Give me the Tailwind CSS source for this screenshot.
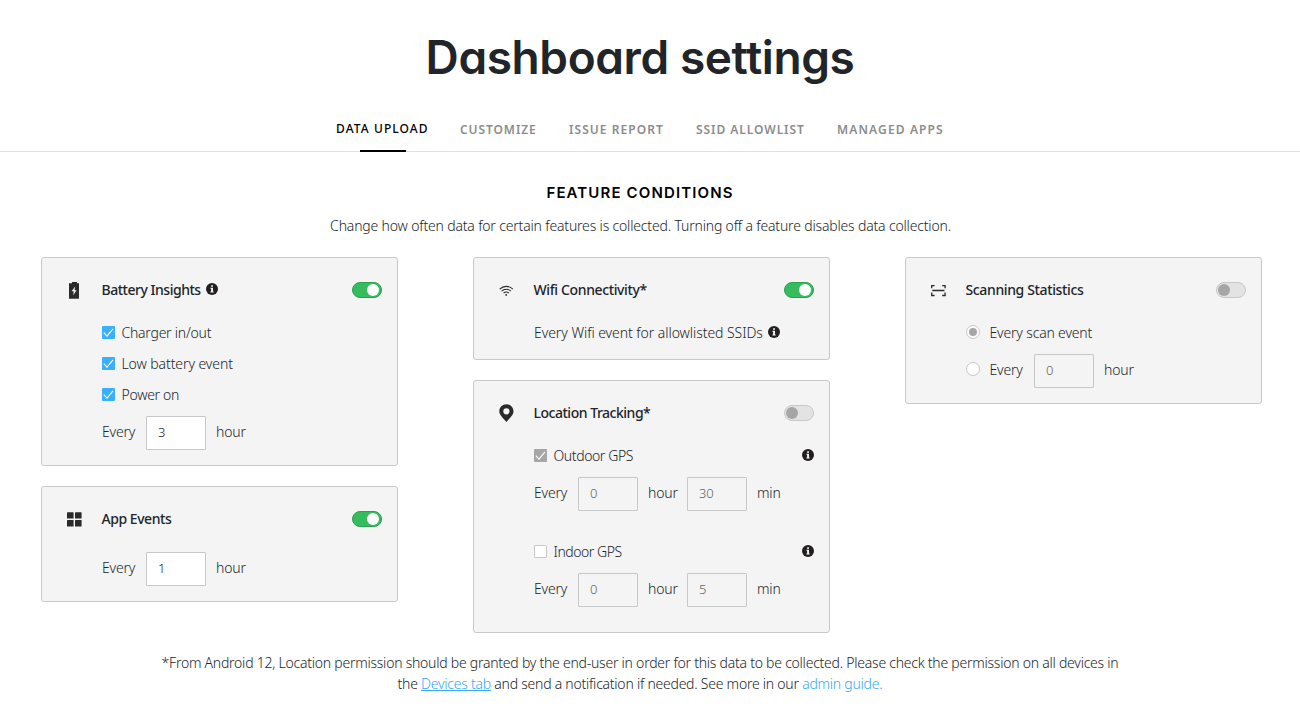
<!DOCTYPE html>
<html lang="en">
<head>
<meta charset="utf-8">
<title>Dashboard settings</title>
<script src="https://cdn.jsdelivr.net/npm/@tailwindcss/browser@4"></script>
</head>
<body class="h-[706px] overflow-hidden bg-white font-['Noto_Sans','Open_Sans',sans-serif] text-sm font-light tracking-[-0.17px] text-[#212529]">
<svg class="hidden">
  <symbol id="info" viewBox="0 0 12 12"><circle cx="6" cy="6" r="6" fill="#231f20"/><path fill="#f4f4f4" d="M5.1 2.2h1.900v1.500H5.100zM4.400 4.800H7v3.600h.7v1H4.400v-1h.7V5.800h-.7z"/></symbol>
  <symbol id="check" viewBox="0 0 13 13"><path d="M1.8 6.600l3.200 3.500 6-7.200" fill="none" stroke="#fff" stroke-width="1.1"/></symbol>
</svg>

<header class="border-b border-[#dfdfdf]">
  <h1 class="flex h-[106px] w-[1280px] items-center justify-center pt-[9px] font-['Inter',sans-serif] text-[46px] font-semibold tracking-[-0.4px] [font-feature-settings:'cv11']">Dashboard settings</h1>
  <nav class="flex h-[45px] pl-[336px] text-xs font-semibold text-[#8c8c8c] whitespace-nowrap">
    <a class="-mb-px flex w-[93px] flex-col items-center justify-between pt-[14px] font-medium text-black"><span class="w-full leading-[18px] tracking-[1.1px]">DATA UPLOAD</span><span class="h-0.5 w-[46px] bg-black"></span></a>
    <a class="ml-[31px] w-[77px] pt-[15px] leading-[18px] tracking-[0.92px]">CUSTOMIZE</a>
    <a class="ml-8 w-[95px] pt-[15px] leading-[18px] tracking-[1.05px]">ISSUE REPORT</a>
    <a class="ml-8 w-[110px] pt-[15px] leading-[18px] tracking-[0.94px]">SSID ALLOWLIST</a>
    <a class="ml-[31px] w-[107px] pt-[15px] leading-[18px] tracking-[1.13px]">MANAGED APPS</a>
  </nav>
</header>

<main>
  <section class="w-[1280px] pt-[29px] text-center">
    <h2 class="font-['Inter',sans-serif] text-[15px] leading-6 font-semibold tracking-[1.13px] text-black">FEATURE CONDITIONS</h2>
    <p class="mt-2.5 pl-px leading-[21px]">Change how often data for certain features is collected. Turning off a feature disables data collection.</p>
  </section>

  <div class="mt-[21px] flex h-[376px] items-start gap-[75px] pl-[41px]">
    <div class="flex w-[357px] flex-col gap-5">
      <section class="rounded-[3px] border border-[#c8c8c8] bg-[#f4f4f4] pb-[15px]">
        <div class="flex h-[59px] items-center pt-[5px] pr-[15px] pl-[22px]">
          <svg class="mr-[17.500px] size-5" viewBox="0 0 20 20"><path d="M8 2h5v1.200h2v15.600H5V3.200h3z" fill="#2a2a2a"/><path d="M11.200 6.500l-3.600 4.700h2.200l-.7 4 3.500-4.900h-2.100z" fill="#f4f4f4"/></svg>
          <h3 class="font-medium tracking-[-0.48px]">Battery Insights</h3>
          <svg class="mb-0.5 ml-[5px] size-3"><use href="#info"/></svg>
          <span class="ml-auto flex h-4 w-[30px] justify-end rounded-full border border-[#2ba04f] bg-[#34bc5e] p-px pr-0.5"><i class="size-3 rounded-full bg-white"></i></span>
        </div>
        <div class="pl-[60px]">
          <div class="flex h-[31px] items-center gap-[6.500px] tracking-[-0.24px]"><span class="size-[13px] rounded-[1px] bg-[#38b0ff]"><svg class="size-[13px]"><use href="#check"/></svg></span>Charger in/out</div>
          <div class="flex h-[31px] items-center gap-[6.500px] tracking-[-0.09px]"><span class="size-[13px] rounded-[1px] bg-[#38b0ff]"><svg class="size-[13px]"><use href="#check"/></svg></span>Low battery event</div>
          <div class="flex h-[31px] items-center gap-[6.500px] tracking-[-0.3px]"><span class="size-[13px] rounded-[1px] bg-[#38b0ff]"><svg class="size-[13px]"><use href="#check"/></svg></span>Power on</div>
          <div class="mt-1.5 flex h-[34px] items-center"><span class="w-11 pb-0.5">Every</span><span class="flex h-[34px] w-[60px] items-center rounded-[1px] border border-[#c8c8c8] bg-white pb-px pl-[11px] text-[13px]">3</span><span class="ml-2.5 pb-0.5">hour</span></div>
        </div>
      </section>
      <section class="rounded-[3px] border border-[#c8c8c8] bg-[#f4f4f4] pb-[15px]">
        <div class="flex h-[59px] items-center pt-[5px] pr-[15px] pl-[22px]">
          <svg class="mr-[17.500px] size-5" viewBox="0 0 20 20" fill="#2a2a2a"><rect x="3" y="3.200" width="6.600" height="6.300" rx=".6"/><rect x="11" y="3.200" width="6.600" height="6.300" rx=".6"/><rect x="3" y="11" width="6.600" height="6.500" rx=".6"/><rect x="11" y="11" width="6.600" height="6.500" rx=".6"/></svg>
          <h3 class="font-medium tracking-[-0.46px]">App Events</h3>
          <span class="ml-auto flex h-4 w-[30px] justify-end rounded-full border border-[#2ba04f] bg-[#34bc5e] p-px pr-0.5"><i class="size-3 rounded-full bg-white"></i></span>
        </div>
        <div class="pl-[60px]">
          <div class="mt-1.5 flex h-[34px] items-center"><span class="w-11 pb-0.5">Every</span><span class="flex h-[34px] w-[60px] items-center rounded-[1px] border border-[#c8c8c8] bg-white pb-px pl-[11px] text-[13px]">1</span><span class="ml-2.5 pb-0.5">hour</span></div>
        </div>
      </section>
    </div>

    <div class="flex w-[357px] flex-col gap-5">
      <section class="rounded-[3px] border border-[#c8c8c8] bg-[#f4f4f4] pb-[11px]">
        <div class="flex h-[59px] items-center pt-[5px] pr-[15px] pl-[22px]">
          <svg class="mr-[17.500px] size-5" viewBox="0 0 20 20" fill="none" stroke="#2a2a2a" stroke-width="1.1"><path d="M3.700 9.100c3.700-3.700 9.400-3.700 13.100 0M5.600 11.200c2.700-2.600 6.600-2.600 9.300 0M7.600 13.200c1.600-1.500 3.700-1.500 5.300 0"/><circle cx="10.200" cy="14.900" r=".9" fill="#2a2a2a" stroke="none"/></svg>
          <h3 class="font-medium tracking-[-0.37px]">Wifi Connectivity*</h3>
          <span class="ml-auto flex h-4 w-[30px] justify-end rounded-full border border-[#2ba04f] bg-[#34bc5e] p-px pr-0.5"><i class="size-3 rounded-full bg-white"></i></span>
        </div>
        <div class="pl-[60px]">
          <div class="flex h-[31px] items-center tracking-[-0.06px]">Every Wifi event for allowlisted SSIDs<svg class="mb-0.5 ml-[5px] size-3"><use href="#info"/></svg></div>
        </div>
      </section>
      <section class="rounded-[3px] border border-[#c8c8c8] bg-[#f4f4f4] pb-[25px]">
        <div class="flex h-[59px] items-center pt-[5px] pr-[15px] pl-[22px]">
          <svg class="mr-[17.500px] size-5" viewBox="0 0 20 20"><path fill="#2a2a2a" fill-rule="evenodd" d="M10.400 1.300c4 0 7.100 3 7.100 7 0 3.200-2.200 5.200-7.100 10.700C5.500 13.500 3.300 11.500 3.300 8.300c0-4 3.100-7 7.100-7zm0 3.900a3.100 3.100 0 1 0 0 6.200 3.100 3.100 0 0 0 0-6.200z"/></svg>
          <h3 class="font-medium tracking-[-0.48px]">Location Tracking*</h3>
          <span class="ml-auto flex h-4 w-[30px] rounded-full border border-[#c8c8c8] bg-[#e3e3e3] p-px"><i class="size-3 rounded-full bg-[#a6a6a6]"></i></span>
        </div>
        <div class="pr-[15px] pl-[60px]">
          <div class="flex h-[31px] items-center gap-[6.500px] tracking-[-0.4px]"><span class="size-[13px] rounded-[1px] bg-[#a6a6a6]"><svg class="size-[13px]"><use href="#check"/></svg></span>Outdoor GPS<svg class="mb-0.5 ml-auto size-3"><use href="#info"/></svg></div>
          <div class="mt-1.5 flex h-[34px] items-center"><span class="w-11 pb-0.5">Every</span><span class="flex h-[34px] w-[60px] items-center rounded-[1px] border border-[#c8c8c8] pb-px pl-[11px] text-[13px] text-[#606060]">0</span><span class="ml-2.5 w-[39px] pb-0.5">hour</span><span class="flex h-[34px] w-[60px] items-center rounded-[1px] border border-[#c8c8c8] pb-px pl-[11px] text-[13px] text-[#606060]">30</span><span class="ml-2.5 pb-0.5">min</span></div>
          <div class="mt-[25px] flex h-[31px] items-center gap-[6.500px] tracking-[-0.45px]"><span class="size-[13px] rounded-[1px] border border-[#c8c8c8] bg-white"></span>Indoor GPS<svg class="mb-0.5 ml-auto size-3"><use href="#info"/></svg></div>
          <div class="mt-1.5 flex h-[34px] items-center"><span class="w-11 pb-0.5">Every</span><span class="flex h-[34px] w-[60px] items-center rounded-[1px] border border-[#c8c8c8] pb-px pl-[11px] text-[13px] text-[#606060]">0</span><span class="ml-2.5 w-[39px] pb-0.5">hour</span><span class="flex h-[34px] w-[60px] items-center rounded-[1px] border border-[#c8c8c8] pb-px pl-[11px] text-[13px] text-[#606060]">5</span><span class="ml-2.5 pb-0.5">min</span></div>
        </div>
      </section>
    </div>

    <section class="w-[357px] rounded-[3px] border border-[#c8c8c8] bg-[#f4f4f4] pb-[15px]">
      <div class="flex h-[59px] items-center pt-[5px] pr-[15px] pl-[22px]">
        <svg class="mr-[17.500px] size-5" viewBox="0 0 20 20" fill="none" stroke="#2a2a2a" stroke-width="1.300"><path d="M6.600 5.600H3.700v2.600M3.700 12.500v3h2.900M14.200 5.600h2.900v2.600M17.100 12.500v3h-2.900M4.300 10.500h12.200"/></svg>
        <h3 class="font-medium tracking-[-0.37px]">Scanning Statistics</h3>
        <span class="ml-auto flex h-4 w-[30px] rounded-full border border-[#c8c8c8] bg-[#e3e3e3] p-px"><i class="size-3 rounded-full bg-[#a6a6a6]"></i></span>
      </div>
      <div class="pl-[60px]">
        <div class="flex h-[31px] items-center"><span class="mr-[9.500px] mb-0.5 flex size-[14px] items-center justify-center rounded-full border border-[#c8c8c8] bg-white"><i class="size-2 rounded-full bg-[#a6a6a6]"></i></span>Every scan event</div>
        <div class="mt-1.5 flex h-[34px] items-center"><span class="mr-[9.500px] mb-1 size-[14px] rounded-full border border-[#c8c8c8] bg-white"></span><span class="w-[44.500px] pb-0.5">Every</span><span class="flex h-[34px] w-[60px] items-center rounded-[1px] border border-[#c8c8c8] pb-px pl-[11px] text-[13px] text-[#606060]">0</span><span class="ml-2.5 pb-0.5">hour</span></div>
      </div>
    </section>
  </div>

  <p class="w-[1280px] pt-[19px] text-center leading-[21px] tracking-[-0.24px] whitespace-nowrap">*From Android 12, Location permission should be granted by the end-user in order for this data to be collected. Please check the permission on all devices in<br>the <a class="text-[#38a8f5] underline">Devices tab</a> and send a notification if needed. See more in our <a class="text-[#38a8f5]">admin guide.</a></p>
</main>
</body>
</html>
